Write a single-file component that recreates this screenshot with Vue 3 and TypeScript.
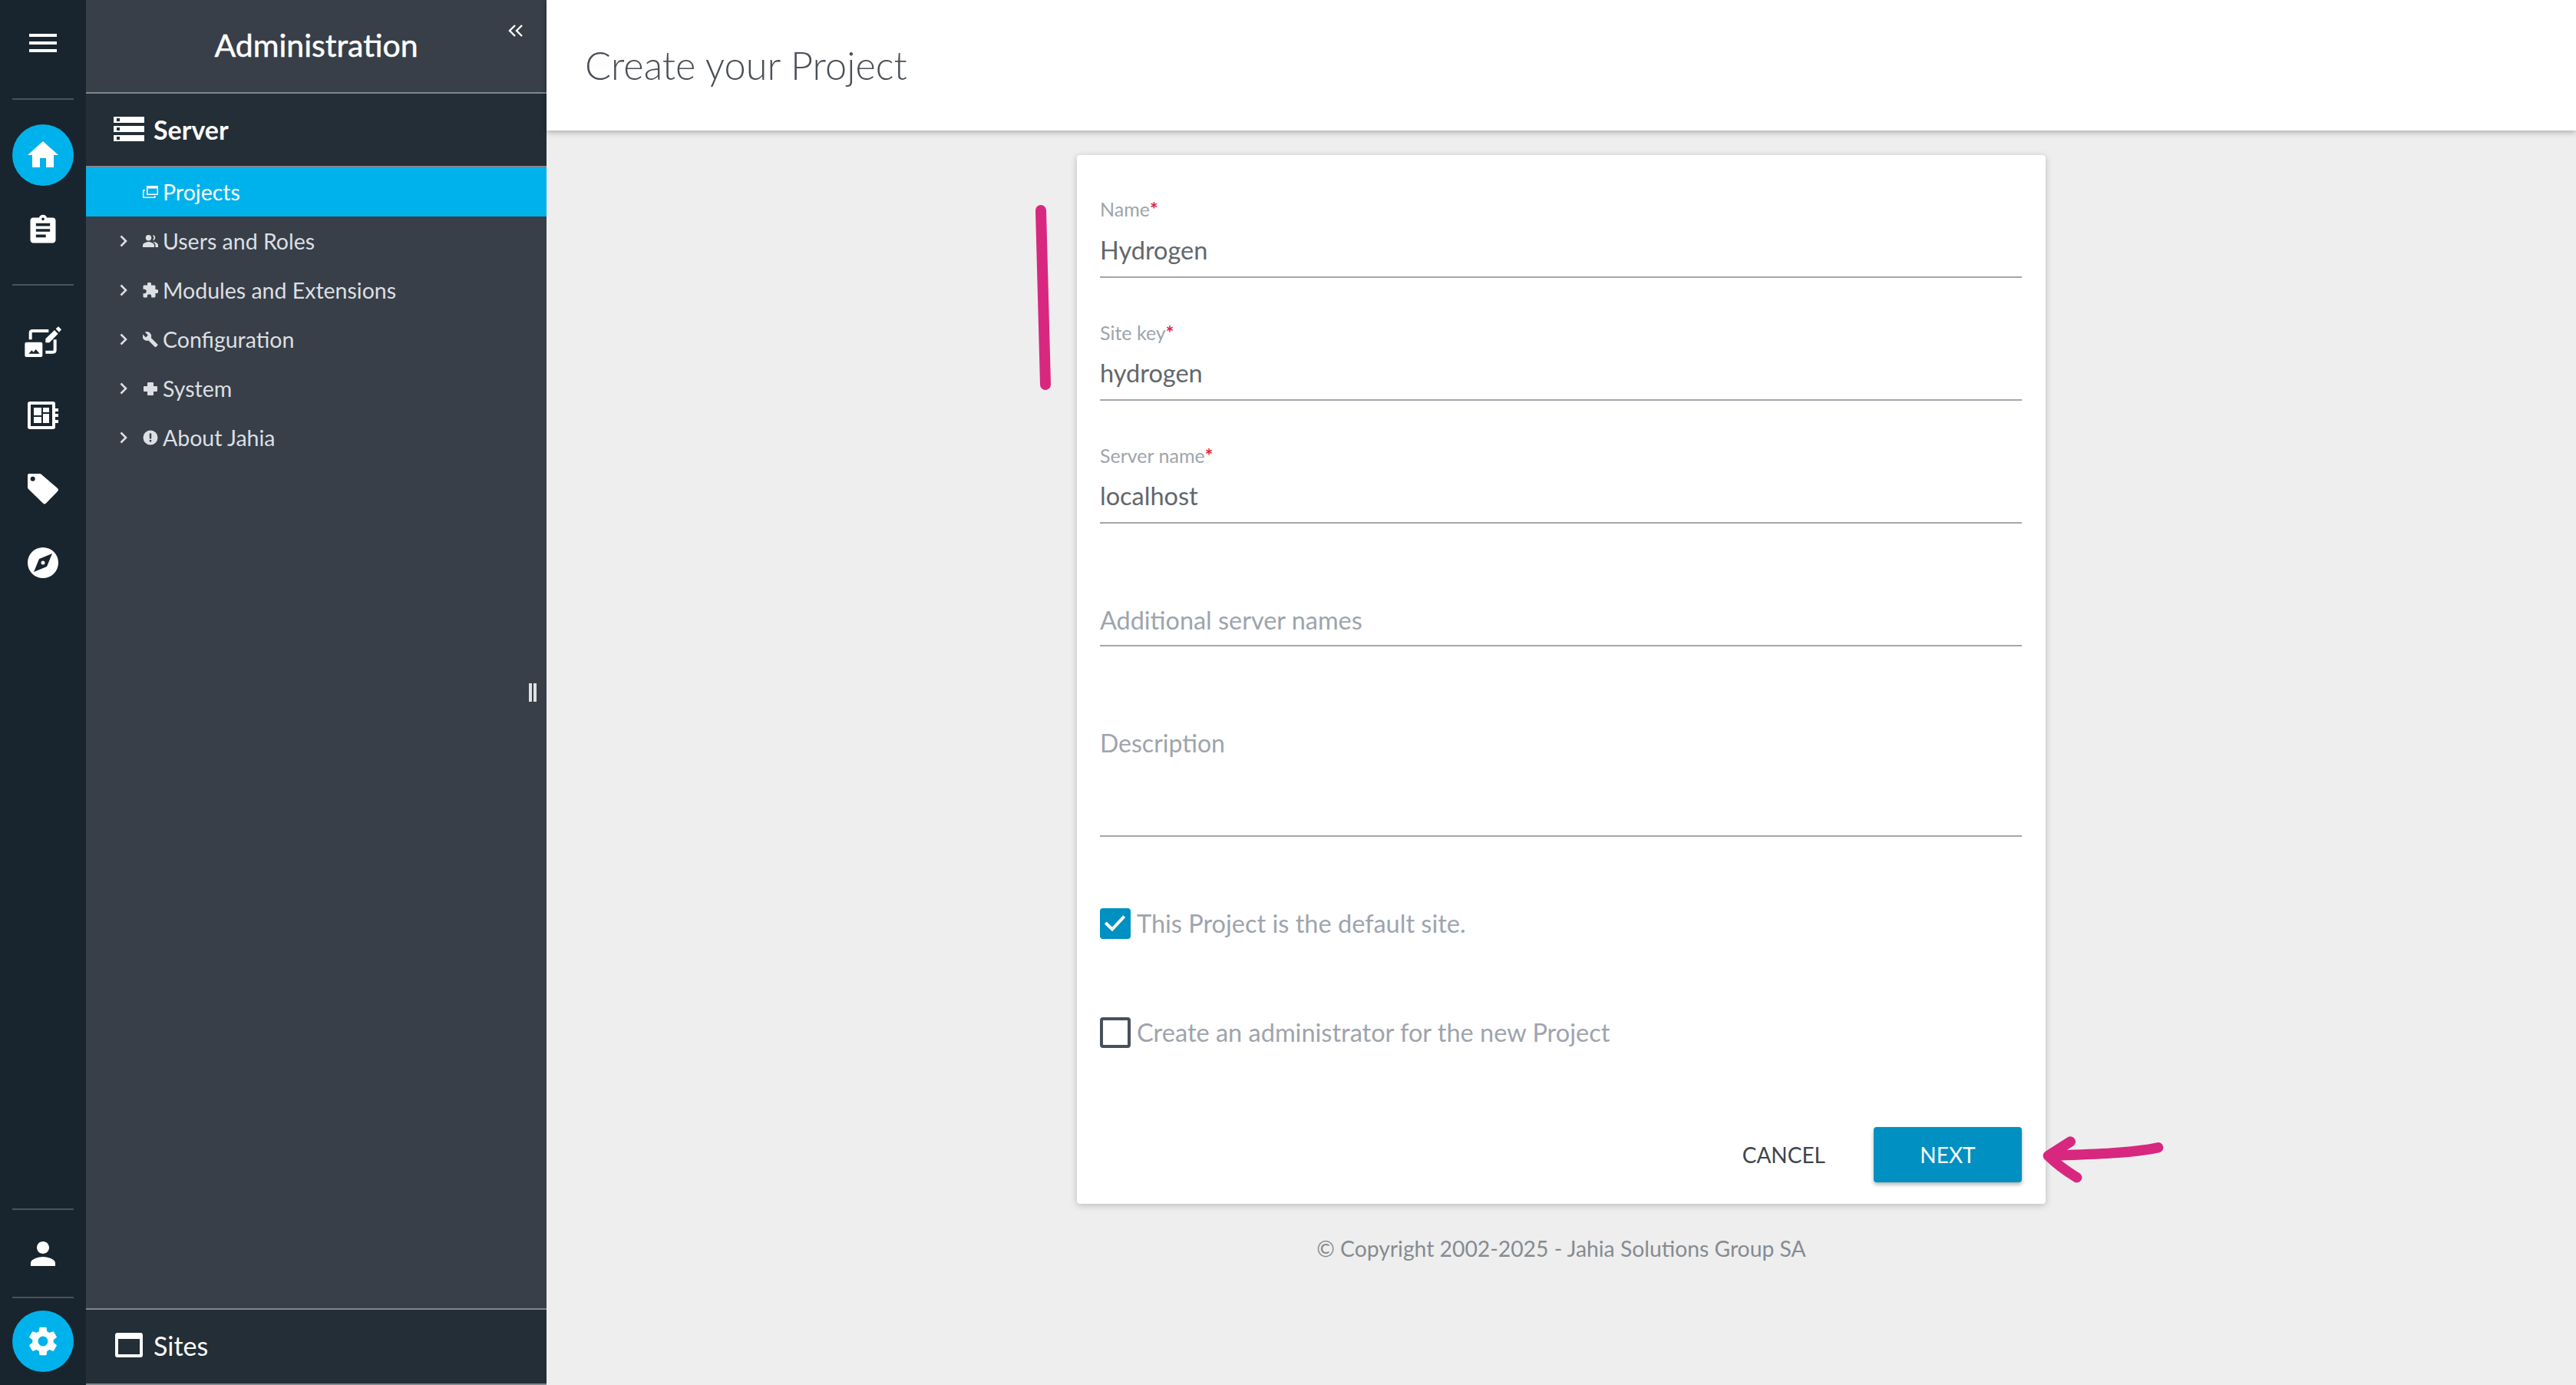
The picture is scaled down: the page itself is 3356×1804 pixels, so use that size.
<script setup lang="ts">
interface NavRow { label: string; icon: string; active?: boolean }
const rows: NavRow[] = [
  { label: 'Projects', icon: 'projects', active: true },
  { label: 'Users and Roles', icon: 'users' },
  { label: 'Modules and Extensions', icon: 'puzzle' },
  { label: 'Configuration', icon: 'wrench' },
  { label: 'System', icon: 'plus' },
  { label: 'About Jahia', icon: 'info' },
]
const reqFields = [
  { label: 'Name', value: 'Hydrogen' },
  { label: 'Site key', value: 'hydrogen' },
  { label: 'Server name', value: 'localhost' },
]
</script>

<template>
  <div class="app">
    <aside class="rail">
      <div class="rail-top">
        <svg class="burger" viewBox="0 0 36 24"><path d="M0 0h36v4H0zM0 10h36v4H0zM0 20h36v4H0z" /></svg>
      </div>
      <div class="rule"></div>
      <div class="rail-btn on">
        <svg class="ic s48" viewBox="0 0 24 24"><path d="M10 20v-6h4v6h5v-8h3L12 3 2 12h3v8z" /></svg>
      </div>
      <div class="rail-btn">
        <svg class="ic s44 clip" viewBox="0 0 24 24"><path fill-rule="evenodd" d="M19 3h-4.180C14.400 1.840 13.300 1 12 1s-2.400.84-2.820 2H5c-1.100 0-2 .9-2 2v14c0 1.100.9 2 2 2h14c1.100 0 2-.9 2-2V5c0-1.100-.9-2-2-2zm-7 0c.55 0 1 .45 1 1s-.45 1-1 1-1-.45-1-1 .45-1 1-1zm-5 4h10v2H7zm0 4h10v2H7zm0 4h7v2H7z" /></svg>
      </div>
      <div class="rule second"></div>
      <div class="rail-btn">
        <svg class="ic edit" viewBox="96 73 144 120">
          <path class="line" d="M119 125V99q0-8 8-8h63" />
          <path class="line" d="M178 174h29q8 0 8-8v-41" />
          <path d="M178 137v-15l35-34 14 14-34 35zM218 83l10-9 12 12-9 10z" />
          <rect x="97" y="135" width="69" height="58" rx="6" />
          <path class="cut" d="M112 180l12-13 7 7 9-11 15 17z" />
        </svg>
      </div>
      <div class="rail-btn">
        <svg class="ic" viewBox="0 0 40 36"><path fill-rule="evenodd" d="M3 0h30a3 3 0 0 1 3 3v30a3 3 0 0 1-3 3H3a3 3 0 0 1-3-3V3a3 3 0 0 1 3-3zm1 4v28h28V4zm4 4h10v10H8zm12 0h8v6h-8zm0 8h8v12h-8zM8 20h10v8H8z" /><path d="M36 9h4v4h-4zM36 16h4v4h-4zM36 24h4v4h-4z" /></svg>
      </div>
      <div class="rail-btn">
        <svg class="ic" viewBox="0 0 40 40"><path fill-rule="evenodd" d="M2 0h13a4 4 0 0 1 3 1l21 18a3 3 0 0 1 0 4L24 38.500a3 3 0 0 1-4 0L1 20a4 4 0 0 1-1-3V2a2 2 0 0 1 2-2zm4.700 3.700a3 3 0 1 0 0 6 3 3 0 0 0 0-6z" /></svg>
      </div>
      <div class="rail-btn">
        <svg class="ic" viewBox="0 0 40 40"><path fill-rule="evenodd" d="M20 0a20 20 0 1 1 0 40 20 20 0 0 1 0-40zm12 8-17 7-7 17 17-7zM20 17.500a2.500 2.500 0 1 1 0 5 2.500 2.500 0 0 1 0-5z" /></svg>
      </div>
      <div class="rail-fill"></div>
      <div class="rule"></div>
      <div class="rail-btn user">
        <svg class="ic s48" viewBox="0 0 24 24"><path d="M12 12c2.210 0 4-1.790 4-4s-1.790-4-4-4-4 1.790-4 4 1.790 4 4 4zm0 2c-2.670 0-8 1.340-8 4v2h16v-2c0-2.660-5.330-4-8-4z" /></svg>
      </div>
      <div class="rule"></div>
      <div class="rail-btn on gear">
        <svg class="ic s44" viewBox="0 0 24 24"><path d="M19.430 12.980c.04-.32.070-.64.070-.98s-.03-.66-.07-.98l2.110-1.650c.19-.15.240-.42.120-.64l-2-3.460c-.12-.22-.39-.3-.61-.22l-2.490 1c-.52-.4-1.080-.73-1.690-.98l-.38-2.650A.488.488 0 0 0 14 2h-4c-.25 0-.46.18-.49.42l-.38 2.650c-.61.25-1.170.59-1.690.98l-2.490-1c-.23-.09-.49 0-.61.22l-2 3.460c-.13.22-.07.49.12.64l2.110 1.650c-.04.32-.07.65-.07.98s.03.66.07.98l-2.110 1.650c-.19.15-.24.42-.12.64l2 3.460c.12.22.39.3.61.22l2.490-1c.52.4 1.080.73 1.690.98l.38 2.650c.03.24.24.42.49.42h4c.25 0 .46-.18.49-.42l.38-2.650c.61-.25 1.170-.59 1.690-.98l2.490 1c.23.09.49 0 .61-.22l2-3.460c.12-.22.07-.49-.12-.64l-2.110-1.650zM12 15.500c-1.930 0-3.500-1.570-3.500-3.500s1.570-3.500 3.500-3.500 3.500 1.570 3.500 3.500-1.570 3.500-3.500 3.500z" /></svg>
      </div>
    </aside>

    <nav class="panel">
      <div class="panel-title">
        <span>Administration</span>
        <svg class="collapse" viewBox="0 0 20 16"><path d="M9 1 2 8l7 7M18 1l-7 7 7 7" /></svg>
      </div>
      <div class="server">
        <svg class="server-ic" viewBox="0 0 40 32"><path fill-rule="evenodd" d="M0 0h40v8H0zm4 2v4h4V2zM0 12h40v8H0zm4 2v4h4v-4zM0 24h40v8H0zm4 2v4h4v-4z" /></svg>
        <span>Server</span>
      </div>
      <div class="rows">
        <div v-for="r in rows" :key="r.label" class="row" :class="{ active: r.active }">
          <svg v-if="!r.active" class="chev" viewBox="0 0 10 16"><path d="M1.500 1.500 8 8l-6.500 6.500" /></svg>
          <span v-else class="chev"></span>
          <svg class="row-ic" viewBox="0 0 20 20">
            <path v-if="r.icon === 'projects'" fill-rule="evenodd" d="M5 2h15v12H5zm1.500 3.500v7h12v-7zM0 7h3v1.500H1.500v8H15V15h1.500v3H0z" />
            <path v-else-if="r.icon === 'users'" fill-rule="evenodd" d="M7.500 2a3.700 3.700 0 1 1 0 7.400 3.700 3.700 0 0 1 0-7.400zM0 18v-2.500c0-3 5-4.500 7.500-4.500s7.500 1.500 7.500 4.500V18zM12.800 2.200a3.400 3.400 0 1 1 0 6.800 5 5 0 0 0 0-6.800zM13 10.800c3 .3 7 1.500 7 4.700V18h-3.500v-2.500c0-1.800-1.500-3.700-3.500-4.700z" />
            <path v-else-if="r.icon === 'puzzle'" d="M18 9h-1.500V5c0-.9-.7-1.500-1.500-1.500h-4V2a2.500 2.500 0 0 0-5 0v1.500H2C1.100 3.500.500 4.100.500 5v3.800H2a2.700 2.700 0 0 1 0 5.400H.500V18c0 .9.600 1.500 1.500 1.500h3.800V18a2.700 2.700 0 0 1 5.400 0v1.500H15c.8 0 1.500-.6 1.500-1.500v-4H18a2.500 2.500 0 0 0 0-5z" />
            <path v-else-if="r.icon === 'wrench'" d="M19.300 16.500 10.800 8c.8-2.100.4-4.600-1.400-6.300C7.600-.1 5-.5 2.800.6l4 4-2.800 2.800-4.100-4C-1.100 5.600-.6 8.200 1.200 10c1.700 1.700 4.100 2.200 6.200 1.400l8.500 8.500c.4.4.9.4 1.300 0l2.100-2.100c.4-.3.400-1 0-1.300z" />
            <path v-else-if="r.icon === 'plus'" d="M7 2h6a1 1 0 0 1 1 1v4h4a1 1 0 0 1 1 1v5a1 1 0 0 1-1 1h-4v4a1 1 0 0 1-1 1H7a1 1 0 0 1-1-1v-4H2a1 1 0 0 1-1-1V8a1 1 0 0 1 1-1h4V3a1 1 0 0 1 1-1z" />
            <path v-else fill-rule="evenodd" d="M10 .500a9.500 9.500 0 1 1 0 19 9.500 9.500 0 0 1 0-19zM8.800 4.500v7h2.400v-7zM8.800 13v2.500h2.400V13z" />
          </svg>
          <span>{{ r.label }}</span>
        </div>
      </div>
      <div class="panel-fill">
        <span class="handle"></span>
      </div>
      <div class="sites">
        <svg class="sites-ic" viewBox="0 0 36 32"><path fill-rule="evenodd" d="M3 0h30a3 3 0 0 1 3 3v26a3 3 0 0 1-3 3H3a3 3 0 0 1-3-3V3a3 3 0 0 1 3-3zm1 8v20h28V8z" /></svg>
        <span>Sites</span>
      </div>
    </nav>

    <main class="main">
      <header class="topbar">Create your Project</header>
      <div class="content">
        <div class="card-wrap">
          <form class="card" @submit.prevent>
            <div v-for="f in reqFields" :key="f.label" class="field">
              <div class="label">{{ f.label }}<b>*</b></div>
              <div class="value">{{ f.value }}</div>
            </div>
            <div class="field addl">
              <div class="label"></div>
              <div class="value ph">Additional server names</div>
            </div>
            <div class="field desc">
              <div class="value ph">Description</div>
            </div>
            <div class="check first">
              <span class="box checked">
                <svg viewBox="0 0 40 40"><path d="M7.300 19 16 27.300 31.700 10.700" /></svg>
              </span>
              <span>This Project is the default site.</span>
            </div>
            <div class="check second">
              <span class="box"></span>
              <span>Create an administrator for the new Project</span>
            </div>
            <div class="actions">
              <button type="button" class="cancel">CANCEL</button>
              <button type="button" class="next">NEXT</button>
            </div>
          </form>
          <svg class="mark stroke" viewBox="0 0 20 241"><path d="M7 7 13 234" /></svg>
          <svg class="mark arrow" viewBox="60 80 480 195"><path d="M515 133C420 155 250 160 100 165" /><path d="M172 110 85 165Q130 210 197 250" /></svg>
        </div>
        <p class="copy">© Copyright 2002-2025 - Jahia Solutions Group SA</p>
      </div>
    </main>
  </div>
</template>

<style>
html, body { margin: 0; padding: 0; background: #eee; }
</style>

<style scoped>
* { box-sizing: border-box; }
.app {
  width: 3356px;
  height: 1804px;
  display: flex;
  overflow: hidden;
  font-family: "Lato", "Noto Sans", sans-serif;
  background: #eee;
}
.rail {
  width: 112px;
  flex: none;
  background: #19252e;
  display: flex;
  flex-direction: column;
  align-items: center;
}
.rail-top { height: 128px; padding-bottom: 16px; display: flex; align-items: center; justify-content: center; flex: none; }
.burger { width: 36px; height: 24px; fill: #fff; display: block; }
.ic { fill: #fff; width: 40px; height: 40px; display: block; }
.ic.s48 { width: 48px; height: 48px; }
.ic.s44 { width: 44px; height: 44px; }
.ic.clip { margin-top: 3px; }
.ic.edit { width: 48px; height: 40px; }
.ic .line { fill: none; stroke: #fff; stroke-width: 12; }
.ic .cut { fill: #19252e; }
.rule { width: 80px; height: 2px; background: #4a525b; flex: none; }
.rule.second { margin-top: 32px; }
.rail-btn { width: 80px; height: 80px; margin-top: 16px; border-radius: 50%; display: flex; align-items: center; justify-content: center; flex: none; }
.rule + .rail-btn { margin-top: 32px; }
.rail-btn.on { background: #00b2eb; }
.rule.second + .rail-btn { margin-top: 33px; }
.rail-fill { flex: 1; }
.rail-btn.user { margin-top: 17px; margin-bottom: 16px; }
.rail-btn.gear { margin-top: 16px; margin-bottom: 17px; }

.panel {
  width: 600px;
  flex: none;
  background: #383f48;
  display: flex;
  flex-direction: column;
  color: #fff;
}
.panel-title {
  height: 122px;
  flex: none;
  border-bottom: 2px solid #7f878f;
  display: flex;
  align-items: center;
  justify-content: center;
  font-size: 41px;
  -webkit-text-stroke: .5px #fff;
  padding-bottom: 3px;
  position: relative;
}
.collapse {
  position: absolute;
  left: 550px;
  top: 32px;
  width: 20px;
  height: 16px;
  fill: none;
  stroke: #fff;
  stroke-width: 2.4;
}
.server {
  height: 96px;
  flex: none;
  background: #232e36;
  border-bottom: 2px solid #7f878f;
  display: flex;
  align-items: center;
  padding-left: 36px;
  padding-bottom: 2px;
  gap: 12px;
  font-size: 34px;
  font-weight: 700;
}
.server-ic { width: 40px; height: 32px; fill: #fff; }
.rows { flex: none; }
.row {
  height: 64px;
  display: flex;
  align-items: center;
  padding-left: 44px;
  font-size: 28.5px;
  color: #dcdfe3;
}
.row.active { background: #00b2eb; color: #fff; }
.chev { width: 10px; height: 16px; fill: none; stroke: #dcdfe3; stroke-width: 2.6; flex: none; margin-right: 20px; }
.row-ic { width: 20px; height: 20px; fill: currentColor; flex: none; margin-right: 6px; }
.panel-fill { flex: 1; position: relative; }
.handle {
  position: absolute;
  left: 577px;
  top: 288px;
  width: 10px;
  height: 24px;
  border-left: 4px solid #dfe1e3;
  border-right: 4px solid #dfe1e3;
}
.sites {
  height: 100px;
  flex: none;
  background: #232e36;
  border-top: 2px solid #7f878f;
  border-bottom: 2px solid #7f878f;
  display: flex;
  align-items: center;
  padding-left: 38px;
  padding-bottom: 4px;
  gap: 14px;
  font-size: 34px;
}
.sites-ic { width: 36px; height: 32px; fill: #fff; }

.main { flex: 1; display: flex; flex-direction: column; min-width: 0; }
.topbar {
  height: 170px;
  flex: none;
  background: #fff;
  box-shadow: 0 2px 8px rgba(0, 0, 0, .3);
  display: flex;
  align-items: center;
  padding-left: 50px;
  padding-bottom: 2px;
  font-size: 50.5px;
  font-weight: 300;
  color: #4a4f55;
  position: relative;
  z-index: 1;
}
.content { flex: 1; display: flex; flex-direction: column; align-items: center; padding-top: 32px; }
.card-wrap { position: relative; width: 1262px; }
.card {
  width: 1262px;
  height: 1366px;
  background: #fff;
  border-radius: 4px;
  box-shadow: 0 2px 10px rgba(0, 0, 0, .22);
  padding: 0 31px 0 30px;
  position: relative;
}
.field {
  height: 160px;
  border-bottom: 2px solid #a3a7ab;
  display: flex;
  flex-direction: column;
}
.label { font-size: 25px; color: #9ea4ad; height: 30px; margin-top: 56px; line-height: 30px; }
.field:first-child .label { margin-top: 55px; }
.label b { color: #e8203a; font-weight: 700; }
.value { font-size: 32.5px; color: #62676c; line-height: 40px; margin-top: 18px; }
.field:first-child .value { margin-top: 19px; }
.value.ph { color: #9ea4ad; font-size: 32.4px; }
.field.addl .value { margin-top: 20px; }
.field.desc { height: 248px; }
.field.desc .value { margin-top: 106px; font-size: 32px; }
.check { display: flex; align-items: center; font-size: 32.5px; color: #9ea4ad; gap: 8px; height: 40px; }
.check > span:last-child { position: relative; top: -1px; }
.check.first { margin-top: 93px; }
.check.second { margin-top: 102px; }
.box { width: 40px; height: 40px; border: 4px solid #48505a; border-radius: 4px; flex: none; display: block; }
.box.checked { background: #0090c1; border: 0; }
.box svg { width: 40px; height: 40px; display: block; fill: none; stroke: #fff; stroke-width: 4; }
.actions { position: absolute; right: 31px; bottom: 28px; display: flex; align-items: center; }
.actions button { font-family: inherit; font-size: 28px; border: 0; cursor: pointer; }
.cancel { background: none; color: #3e454d; margin-right: 63px; padding: 0; }
.next { width: 193px; height: 72px; background: #0090c1; color: #fff; border-radius: 4px; box-shadow: 0 3px 5px rgba(0, 0, 0, .3); }
.copy { margin: 40px 0 0; font-size: 28.3px; line-height: 36px; color: #868b90; }
.mark { position: absolute; fill: none; stroke: #d8277f; stroke-linecap: round; stroke-linejoin: round; }
.stroke { left: -54px; top: 65px; width: 20px; height: 241px; stroke-width: 14; }
.arrow { left: 1257px; top: 1275px; width: 160px; height: 65px; stroke-width: 40; }
</style>
